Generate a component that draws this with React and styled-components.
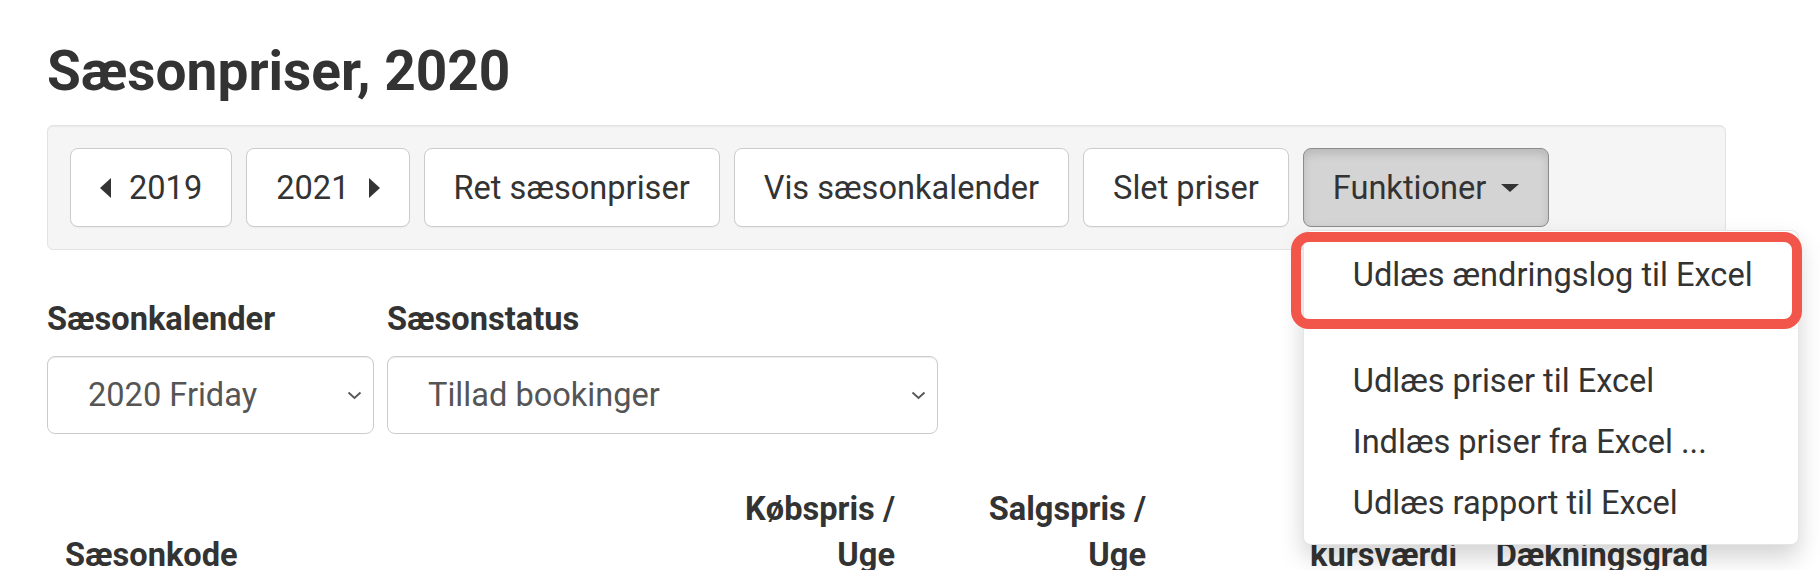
import React from "react";
import styled, { createGlobalStyle } from "styled-components";

const GlobalStyle = createGlobalStyle`
  * { box-sizing: border-box; }
  body {
    margin: 0;
    background: #fff;
    color: #333;
    font-family: Roboto, "Liberation Sans", sans-serif;
  }
`;

const Page = styled.div`
  width: 1820px;
  height: 570px;
  overflow: hidden;
  padding: 40px 94px 0 47px;
`;

const Title = styled.h1`
  margin: 0;
  font-size: 55px;
  line-height: 62px;
  font-weight: 700;
  color: #333;
`;

const Well = styled.div`
  margin-top: 23px;
  display: flex;
  gap: 14px;
  padding: 22px;
  background: #f5f5f5;
  border: 1px solid #e3e3e3;
  border-radius: 6px;
  box-shadow: inset 0 1px 1px rgba(0, 0, 0, 0.05);
`;

const BtnGroup = styled.div`
  position: relative;
`;

const Button = styled.button`
  height: 79px;
  display: inline-flex;
  align-items: center;
  padding: 0 29px;
  font-family: inherit;
  font-size: 32.6px;
  color: #333;
  background: ${({ $active }) => ($active ? "#d4d4d4" : "#fff")};
  border: 1px solid ${({ $active }) => ($active ? "#8c8c8c" : "#ccc")};
  border-radius: 8px;
  box-shadow: ${({ $active }) =>
    $active ? "inset 0 5px 8px rgba(0, 0, 0, 0.125)" : "0 1px 1px rgba(0, 0, 0, 0.04)"};
  white-space: nowrap;
  cursor: pointer;
`;

const SideCaret = styled.span`
  width: 0;
  height: 0;
  border-top: 10px solid transparent;
  border-bottom: 10px solid transparent;
  ${({ $dir }) =>
    $dir === "left"
      ? "border-right: 11px solid #333; margin-right: 18px;"
      : "border-left: 11px solid #333; margin-left: 19px;"}
`;

const DownCaret = styled.span`
  width: 0;
  height: 0;
  margin-left: 15px;
  border-top: 8px solid #333;
  border-left: 9px solid transparent;
  border-right: 9px solid transparent;
`;

const Menu = styled.div`
  position: absolute;
  top: calc(100% + 3px);
  left: 0;
  width: 496px;
  padding: 14px 0 10px;
  background: #fff;
  border: 1px solid rgba(0, 0, 0, 0.1);
  border-radius: 8px;
  box-shadow: 0 12px 24px rgba(0, 0, 0, 0.175);
  z-index: 10;
`;

const MenuItem = styled.div`
  padding: 0 49px;
  font-size: 32.6px;
  line-height: 61px;
  color: #333;
  white-space: nowrap;
`;

const MenuDivider = styled.div`
  height: 1px;
  margin: 22px 0;
  background: #f7f7f7;
`;

const Highlight = styled.div`
  position: absolute;
  left: -13px;
  top: 1px;
  width: 511px;
  height: 97px;
  border: 10px solid #f2554a;
  border-radius: 18px;
  pointer-events: none;
`;

const Filters = styled.div`
  margin-top: 46px;
  display: flex;
  gap: 13px;
`;

const Field = styled.div`
  display: flex;
  flex-direction: column;
  width: ${({ $w }) => $w}px;
`;

const Label = styled.label`
  font-size: 32.6px;
  line-height: 46px;
  font-weight: 700;
  margin-bottom: 14px;
`;

const SelectBox = styled.div`
  height: 78px;
  display: flex;
  align-items: center;
  justify-content: space-between;
  padding: 0 11px 0 40px;
  font-size: 32.6px;
  color: #555;
  background: #fff;
  border: 1px solid #ccc;
  border-radius: 8px;
  box-shadow: inset 0 1px 1px rgba(0, 0, 0, 0.075);
`;

const Table = styled.table`
  margin-top: 52px;
  width: 1679px;
  border-collapse: collapse;
  table-layout: fixed;
`;

const Th = styled.th`
  padding: 0 18px;
  font-size: 32.6px;
  line-height: 46px;
  font-weight: 700;
  color: #333;
  vertical-align: bottom;
  text-align: ${({ $align }) => $align || "left"};
`;

const Chevron = () => (
  <svg width="15" height="9" viewBox="0 0 15 9" fill="none">
    <path d="M1.5 1.5 L7.5 7 L13.5 1.5" stroke="#555" strokeWidth="1.8" />
  </svg>
);

const menuItems = [
  "Udlæs priser til Excel",
  "Indlæs priser fra Excel ...",
  "Udlæs rapport til Excel",
];

export default function App() {
  return (
    <Page>
      <GlobalStyle />
      <Title>Sæsonpriser, 2020</Title>

      <Well>
        <Button>
          <SideCaret $dir="left" />
          2019
        </Button>
        <Button>
          2021
          <SideCaret $dir="right" />
        </Button>
        <Button>Ret sæsonpriser</Button>
        <Button>Vis sæsonkalender</Button>
        <Button>Slet priser</Button>
        <BtnGroup>
          <Button $active>
            Funktioner
            <DownCaret />
          </Button>
          <Menu>
            <MenuItem>Udlæs ændringslog til Excel</MenuItem>
            <MenuDivider />
            {menuItems.map((item) => (
              <MenuItem key={item}>{item}</MenuItem>
            ))}
            <Highlight />
          </Menu>
        </BtnGroup>
      </Well>

      <Filters>
        <Field $w={327}>
          <Label>Sæsonkalender</Label>
          <SelectBox>
            <span>2020 Friday</span>
            <Chevron />
          </SelectBox>
        </Field>
        <Field $w={551}>
          <Label>Sæsonstatus</Label>
          <SelectBox>
            <span>Tillad bookinger</span>
            <Chevron />
          </SelectBox>
        </Field>
      </Filters>

      <Table>
        <colgroup>
          <col style={{ width: 615 }} />
          <col style={{ width: 251 }} />
          <col style={{ width: 251 }} />
          <col style={{ width: 311 }} />
          <col style={{ width: 251 }} />
        </colgroup>
        <thead>
          <tr>
            <Th>Sæsonkode</Th>
            <Th $align="right">
              Købspris /<br />Uge
            </Th>
            <Th $align="right">
              Salgspris /<br />Uge
            </Th>
            <Th $align="right">
              Omregnet<br />kursværdi
            </Th>
            <Th $align="right">Dækningsgrad</Th>
          </tr>
        </thead>
      </Table>
    </Page>
  );
}
